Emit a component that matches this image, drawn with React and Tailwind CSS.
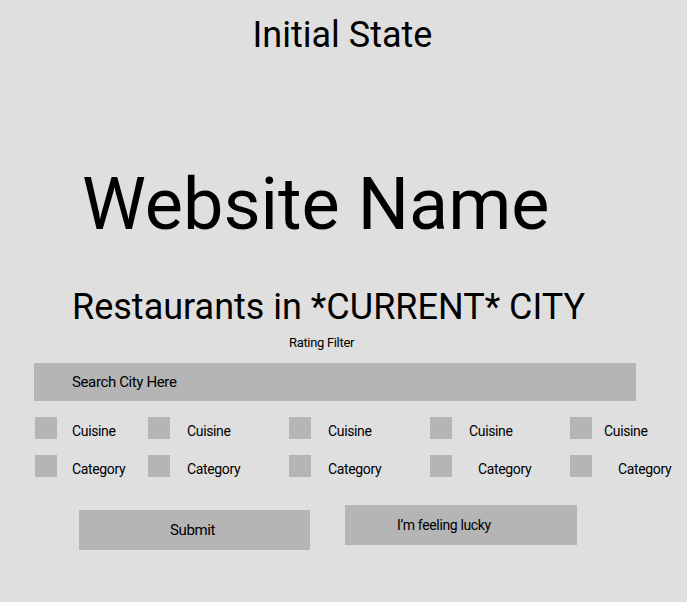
import React from "react";

const cuisineOffsets = ["ml-[15px]", "ml-[17px]", "ml-[17px]", "ml-[17px]", "ml-[12px]"];
const categoryOffsets = ["ml-[15px]", "ml-[17px]", "ml-[17px]", "ml-[26px]", "ml-[26px]"];
const colWidths = ["w-[113px]", "w-[141px]", "w-[141px]", "w-[140px]", "w-auto"];

const FilterRow = ({ label, offsets, labelTop }) => {
  return (
    <div className="flex pl-[35px]">
      {colWidths.map((w, i) => (
        <div key={i} className={`flex items-start shrink-0 ${w}`}>
          <div className="w-[22px] h-[22px] bg-[#b5b5b5] shrink-0" />
          <span className={`text-[14px] tracking-tight leading-none ${offsets[i]} ${labelTop}`}>
            {label}
          </span>
        </div>
      ))}
    </div>
  );
};

function App() {
  return (
    <div className="w-full h-[602px] bg-[#dfdfdf] text-black font-['Roboto',sans-serif] overflow-hidden flex flex-col">
      <h1 className="text-[36px] leading-none text-center pt-[17px] pr-[2px]">
        Initial State
      </h1>

      <h2 className="text-[72px] leading-none mt-[116px] ml-[82px]">
        Website Name
      </h2>

      <h3 className="text-[36px] leading-none mt-[48px] ml-[72px]">
        Restaurants in *CURRENT* CITY
      </h3>

      <p className="text-[13px] tracking-tight leading-none mt-[11px] ml-[289px]">
        Rating Filter
      </p>

      <div className="mt-[14px] ml-[34px] w-[602px] h-[38px] bg-[#b5b5b5] flex items-center pl-[38px] text-[15px] tracking-tight">
        Search City Here
      </div>

      <div className="mt-[16px] flex flex-col gap-[16px]">
        <FilterRow label="Cuisine" offsets={cuisineOffsets} labelTop="mt-[7px]" />
        <FilterRow label="Category" offsets={categoryOffsets} labelTop="mt-[7px]" />
      </div>

      <div className="mt-[28px] flex items-start">
        <button className="ml-[79px] mt-[5px] w-[231px] h-[40px] bg-[#b5b5b5] text-[15px] tracking-tight flex items-center justify-center pr-[4px]">
          Submit
        </button>
        <button className="ml-[35px] w-[232px] h-[40px] bg-[#b5b5b5] text-[14px] tracking-tight flex items-center pl-[52px]">
          I’m feeling lucky
        </button>
      </div>
    </div>
  );
}

export default App;
